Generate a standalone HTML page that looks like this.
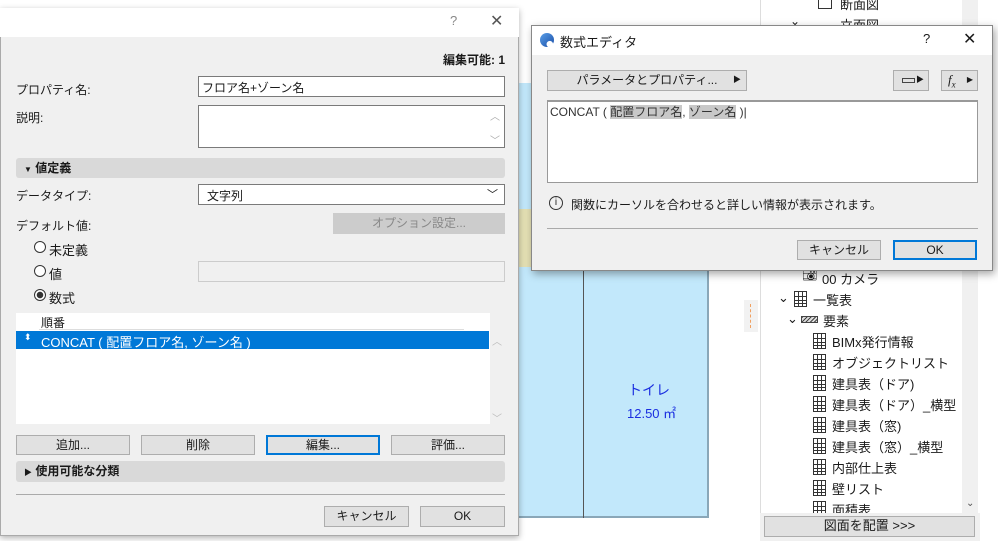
<!DOCTYPE html>
<html><head><meta charset="utf-8"><style>
*{box-sizing:border-box;margin:0;padding:0}
body{width:998px;height:541px;position:relative;overflow:hidden;background:#fff;font-family:"Liberation Sans","Noto Sans CJK JP",sans-serif;font-size:12px;color:#1a1a1a}
.a{position:absolute}
.inp{position:absolute;background:#fff;border:1px solid #7a7a7a}
.btn{position:absolute;background:#e1e1e1;border:1px solid #adadad;text-align:center;line-height:18px;font-size:12px}
.bar{position:absolute;background:#d9d9d9;border-radius:3px;font-weight:bold;line-height:20px}
.t{position:absolute;white-space:nowrap}
.grid{position:absolute;width:13px;height:16px;border:1.5px solid #333;background:linear-gradient(#333,#333) 3px 0/1px 100% no-repeat,linear-gradient(#333,#333) 7px 0/1px 100% no-repeat,linear-gradient(#333,#333) 0 4px/100% 1px no-repeat,linear-gradient(#333,#333) 0 8px/100% 1px no-repeat,linear-gradient(#333,#333) 0 11px/100% 1px no-repeat}
.radio{position:absolute;width:12px;height:12px;border:1px solid #333;border-radius:50%;background:#fff}
</style></head><body>
<!-- background drawing -->
<div class="a" style="left:519px;top:83px;width:190px;height:435px;background:#c2e8fb;border-right:2px solid #8aa7b8;border-bottom:2px solid #8aa7b8"></div>
<div class="a" style="left:519px;top:209px;width:12px;height:58px;background:#e4e0b4"></div>
<div class="a" style="left:583px;top:83px;width:1px;height:435px;background:#555"></div>
<div class="t" style="left:628px;top:380px;color:#1a2ee0;font-size:14px">トイレ</div>
<div class="t" style="left:627px;top:403px;color:#1a2ee0;font-size:13px">12.50 ㎡</div>
<div class="a" style="left:744px;top:300px;width:14px;height:32px;background:#f2f2f2"></div>
<div class="a" style="left:750px;top:304px;width:1px;height:24px;border-left:1px dashed #f0a060"></div>
<!-- right panel -->
<div class="a" style="left:760px;top:0;width:1px;height:541px;background:#ddd"></div>
<div class="a" style="left:962px;top:0;width:16px;height:515px;background:#f0f0f0"></div>
<div class="t" style="left:966px;top:498px;font-size:10px;color:#555">⌄</div>
<div class="a" style="left:818px;top:0;width:14px;height:9px;border:1.5px solid #333;border-top:none"></div>
<div class="t" style="left:840px;top:-6px;font-size:13px">断面図</div>
<div class="t" style="left:790px;top:14px;font-size:12px">⌄</div>
<div class="t" style="left:840px;top:15px;font-size:13px">立面図</div>
<div class="t" style="left:802px;top:268px;font-size:12px">📷︎</div>
<div class="t" style="left:822px;top:269px;font-size:13px">00 カメラ</div>
<div class="t" style="left:778px;top:290px;font-size:13px">⌄</div>
<div class="grid" style="left:794px;top:291px"></div>
<div class="t" style="left:813px;top:290px;font-size:13px">一覧表</div>
<div class="t" style="left:787px;top:311px;font-size:13px">⌄</div>
<div class="a" style="left:801px;top:316px;width:17px;height:7px;background:repeating-linear-gradient(135deg,#444 0 1px,#ddd 1px 3px);border:1px solid #444"></div>
<div class="t" style="left:823px;top:311px;font-size:13px">要素</div>
<div class="grid" style="left:813px;top:333px"></div><div class="t" style="left:832px;top:332px;font-size:13px">BIMx発行情報</div>
<div class="grid" style="left:813px;top:354px"></div><div class="t" style="left:832px;top:353px;font-size:13px">オブジェクトリスト</div>
<div class="grid" style="left:813px;top:375px"></div><div class="t" style="left:832px;top:374px;font-size:13px">建具表（ドア)</div>
<div class="grid" style="left:813px;top:396px"></div><div class="t" style="left:832px;top:395px;font-size:13px">建具表（ドア）_横型</div>
<div class="grid" style="left:813px;top:417px"></div><div class="t" style="left:832px;top:416px;font-size:13px">建具表（窓)</div>
<div class="grid" style="left:813px;top:438px"></div><div class="t" style="left:832px;top:437px;font-size:13px">建具表（窓）_横型</div>
<div class="grid" style="left:813px;top:459px"></div><div class="t" style="left:832px;top:458px;font-size:13px">内部仕上表</div>
<div class="grid" style="left:813px;top:480px"></div><div class="t" style="left:832px;top:479px;font-size:13px">壁リスト</div>
<div class="grid" style="left:813px;top:501px"></div><div class="t" style="left:832px;top:500px;font-size:13px">面積表</div>
<div class="a" style="left:760px;top:513px;width:220px;height:28px;background:#f0f0f0"></div>
<div class="btn" style="left:764px;top:516px;width:211px;height:21px;font-size:13px">図面を配置 &gt;&gt;&gt;</div>

<!-- left dialog -->
<div class="a" style="left:0;top:8px;width:519px;height:528px;background:#f0f0f0;border:1px solid #aaa;box-shadow:0 2px 6px rgba(0,0,0,.3)"></div>
<div class="a" style="left:0;top:8px;width:519px;height:29px;background:#fff"></div>
<div class="t" style="left:450px;top:13px;color:#888;font-size:13px">?</div>
<div class="t" style="left:490px;top:11px;color:#555;font-size:16px">✕</div>
<div class="t" style="left:443px;top:51px;font-weight:bold">編集可能: 1</div>
<div class="t" style="left:16px;top:81px">プロパティ名:</div>
<div class="inp" style="left:198px;top:76px;width:307px;height:21px;padding:2px 3px">フロア名+ゾーン名</div>
<div class="t" style="left:16px;top:109px">説明:</div>
<div class="inp" style="left:198px;top:105px;width:307px;height:43px"><span class="t" style="right:4px;top:2px;color:#aaa;font-size:10px">︿</span><span class="t" style="right:4px;top:26px;color:#aaa;font-size:10px">﹀</span></div>
<div class="bar" style="left:16px;top:158px;width:489px;height:20px;padding-left:8px"><span style="font-size:8px">▼</span> 値定義</div>
<div class="t" style="left:16px;top:187px">データタイプ:</div>
<div class="inp" style="left:198px;top:184px;width:307px;height:21px;padding:2px 8px">文字列<span class="t" style="right:6px;top:1px;font-size:11px">﹀</span></div>
<div class="t" style="left:16px;top:217px">デフォルト値:</div>
<div class="btn" style="left:333px;top:213px;width:172px;height:21px;background:#cccccc;border-color:#cccccc;color:#888;line-height:19px">オプション設定...</div>
<div class="radio" style="left:34px;top:241px"></div><div class="t" style="left:49px;top:240px;font-size:13px">未定義</div>
<div class="radio" style="left:34px;top:265px"></div><div class="t" style="left:49px;top:264px;font-size:13px">値</div>
<div class="a" style="left:198px;top:261px;width:307px;height:21px;border:1px solid #ccc;background:#f0f0f0"></div>
<div class="radio" style="left:34px;top:289px;background:radial-gradient(#333 0 3px,#fff 3.5px)"></div><div class="t" style="left:49px;top:288px;font-size:13px">数式</div>
<div class="a" style="left:16px;top:313px;width:474px;height:111px;background:#fff"></div>
<div class="a" style="left:39px;top:313px;width:425px;height:17px;background:#fff;border-bottom:1px solid #ddd"></div>
<div class="t" style="left:41px;top:314px">順番</div>
<div class="a" style="left:16px;top:331px;width:473px;height:18px;background:#0078d7;color:#fff"><span class="t" style="left:8px;top:1px;font-size:9px">⬍</span><span class="t" style="left:25px;top:1px;font-size:13px">CONCAT ( 配置フロア名, ゾーン名 )</span></div>
<div class="t" style="left:492px;top:333px;color:#bbb;font-size:10px">︿</div>
<div class="t" style="left:492px;top:410px;color:#bbb;font-size:10px">﹀</div>
<div class="btn" style="left:16px;top:435px;width:114px;height:20px">追加...</div>
<div class="btn" style="left:141px;top:435px;width:114px;height:20px">削除</div>
<div class="btn" style="left:266px;top:435px;width:114px;height:20px;border:2px solid #0078d7;line-height:16px">編集...</div>
<div class="btn" style="left:391px;top:435px;width:114px;height:20px">評価...</div>
<div class="bar" style="left:16px;top:461px;width:489px;height:21px;padding-left:8px"><span style="font-size:8px">▶</span> 使用可能な分類</div>
<div class="a" style="left:16px;top:494px;width:489px;height:1px;background:#aaa"></div>
<div class="btn" style="left:324px;top:506px;width:85px;height:21px">キャンセル</div>
<div class="btn" style="left:420px;top:506px;width:85px;height:21px">OK</div>

<!-- formula editor -->
<div class="a" style="left:531px;top:25px;width:462px;height:246px;background:#f0f0f0;border:1px solid #888;box-shadow:2px 3px 8px rgba(0,0,0,.35)"></div>
<div class="a" style="left:532px;top:26px;width:460px;height:29px;background:#fff"></div>
<div class="a" style="left:540px;top:33px;width:14px;height:14px;border-radius:50%;background:radial-gradient(circle at 70% 80%,#fff 0 3px,transparent 3.5px),linear-gradient(135deg,#5b9fe8,#1a4fa8)"></div>
<div class="t" style="left:560px;top:32px;font-size:13px">数式エディタ</div>
<div class="t" style="left:923px;top:31px;font-size:13px">?</div>
<div class="t" style="left:963px;top:29px;font-size:16px">✕</div>
<div class="btn" style="left:547px;top:70px;width:200px;height:21px">パラメータとプロパティ...<span class="t" style="right:5px;top:0;font-size:8px">▶</span></div>
<div class="btn" style="left:893px;top:70px;width:36px;height:21px"><span class="a" style="left:8px;top:7px;width:13px;height:5px;border:1px solid #444"></span><span class="t" style="right:4px;top:0;font-size:8px">▶</span></div>
<div class="btn" style="left:941px;top:70px;width:37px;height:21px;text-align:left;padding-left:6px;font-family:'Liberation Serif',serif;font-style:italic;font-size:13px">f<sub style="font-size:9px">x</sub><span class="t" style="right:4px;top:0;font-size:8px;font-style:normal">▶</span></div>
<div class="a" style="left:547px;top:100px;width:431px;height:83px;background:#fff;border:1px solid #999;border-top:2px solid #999"></div>
<div class="t" style="left:550px;top:103px;font-size:12px;color:#333">CONCAT ( <span style="background:#c8c8c8">配置フロア名</span>, <span style="background:#c8c8c8">ゾーン名</span> )|</div>
<div class="a" style="left:549px;top:196px;width:14px;height:14px;border:1px solid #333;border-radius:50%;font-size:10px;text-align:center;line-height:12px">i</div>
<div class="t" style="left:571px;top:196px">関数にカーソルを合わせると詳しい情報が表示されます。</div>
<div class="a" style="left:547px;top:228px;width:431px;height:1px;background:#aaa"></div>
<div class="btn" style="left:797px;top:240px;width:84px;height:20px">キャンセル</div>
<div class="btn" style="left:893px;top:240px;width:84px;height:20px;border:2px solid #0078d7;line-height:16px">OK</div>
</body></html>
